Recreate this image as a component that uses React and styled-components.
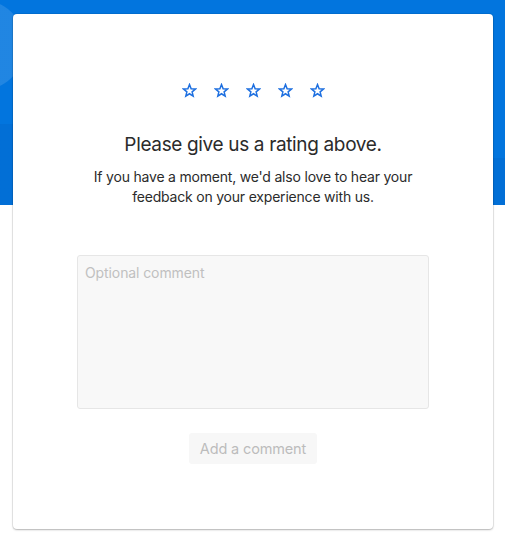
import React from "react";
import styled, { createGlobalStyle } from "styled-components";

const Global = createGlobalStyle`
  html, body { margin: 0; padding: 0; background: #fff; }
  body { font-family: Inter, "Noto Sans", "Liberation Sans", sans-serif; }
  * { box-sizing: border-box; }
`;

const Page = styled.div`
  width: 505px;
  height: 540px;
  padding: 14px 12px 0 13px;
  background:
    linear-gradient(to bottom, transparent 0 124px, rgba(0, 40, 120, 0.08) 124px 205px, transparent 205px) left / 40px 100% no-repeat,
    linear-gradient(to bottom, transparent 0 158px, rgba(0, 40, 120, 0.08) 158px 205px, transparent 205px) right / 40px 100% no-repeat,
    radial-gradient(circle at -20px 45px, rgba(255,255,255,0.12) 0 45px, transparent 46px),
    linear-gradient(to bottom, #0275de 0 205px, #fff 205px);
`;

const Card = styled.div`
  width: 480px;
  height: 515px;
  background: #fff;
  border-radius: 4px;
  box-shadow: 0 0 0 1px rgba(0,0,0,0.06), 0 1px 2px rgba(0,0,0,0.25);
  display: flex;
  flex-direction: column;
  align-items: center;
  padding-top: 68px;
`;

const Stars = styled.div`
  display: flex;
  gap: 17px;
  height: 16px;
`;

const StarBtn = styled.button`
  border: 0;
  background: none;
  padding: 0;
  width: 15px;
  height: 16px;
  cursor: pointer;
  display: flex;
  align-items: center;
  justify-content: center;
`;

const Heading = styled.h1`
  margin: 35px 0 0;
  font-size: 19px;
  line-height: 24px;
  font-weight: 400;
  color: #2b2b2b;
  letter-spacing: -0.35px;
`;

const Text = styled.p`
  margin: 10px 0 0;
  font-size: 14px;
  line-height: 20px;
  color: #2b2b2b;
  text-align: center;
  width: 340px;
  letter-spacing: -0.2px;
`;

const Comment = styled.textarea`
  margin-top: 48px;
  width: 352px;
  height: 154px;
  background: #f8f8f8;
  border: 1px solid #e6e6e6;
  border-radius: 3px;
  padding: 8px 7px;
  font-family: inherit;
  font-size: 14px;
  line-height: 18px;
  letter-spacing: -0.1px;
  color: #333;
  resize: none;
  outline: none;
  &::placeholder { color: #c0c0c0; }
`;

const Submit = styled.button`
  margin-top: 24px;
  width: 128px;
  height: 31px;
  border: 0;
  border-radius: 3px;
  background: #f7f7f7;
  color: #bcbcbc;
  font-family: inherit;
  font-size: 14.5px;
  letter-spacing: -0.15px;
  cursor: default;
`;

const Star = () => (
  <svg width="15" height="15" viewBox="0 0 24 24" fill="none" stroke="#1d6fe0" strokeWidth="2.4" strokeLinejoin="miter">
    <path d="M12 2.5l2.6 6.6 7 .5-5.4 4.5 1.7 6.9L12 17.2l-5.9 3.8 1.7-6.9L2.4 9.6l7-.5z" />
  </svg>
);

export default function App() {
  return (
    <>
      <Global />
      <Page>
        <Card>
          <Stars>
            {[1, 2, 3, 4, 5].map((n) => (
              <StarBtn key={n} aria-label={`${n} star`}><Star /></StarBtn>
            ))}
          </Stars>
          <Heading>Please give us a rating above.</Heading>
          <Text>If you have a moment, we'd also love to hear your feedback on your experience with us.</Text>
          <Comment placeholder="Optional comment" />
          <Submit disabled>Add a comment</Submit>
        </Card>
      </Page>
    </>
  );
}
